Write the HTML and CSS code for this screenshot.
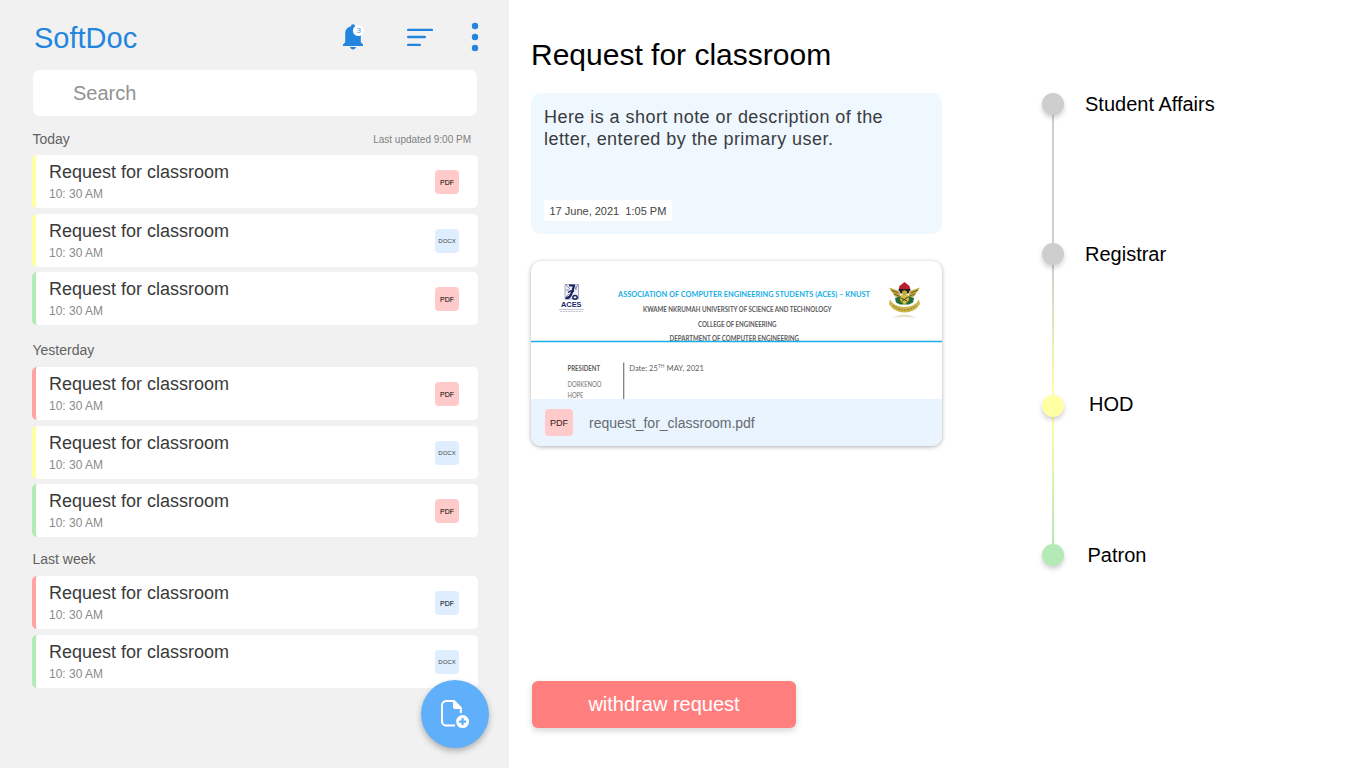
FILE: index.html
```html
<!DOCTYPE html>
<html lang="en">
<head>
<meta charset="utf-8">
<title>SoftDoc</title>
<link rel="stylesheet" href="styles.css">
</head>
<body>
<div class="app">
  <aside class="sidebar">
    <header class="topbar">
      <h1 class="brand">SoftDoc</h1>
      <nav class="actions">
        <svg class="icon-bell" width="24" height="28" viewBox="0 0 24 28">
          <path fill="#2485de" d="M11 .2c1.300 0 2 .9 2 2.100C16.600 3.200 18.800 6 18.800 9.400v8.800L21 20.400V22H1v-1.600l2.200-2.200V9.400C3.200 6 5.400 3.200 9 2.300 9 1.100 9.700.2 11 .2zM8 23h6c-.4 1.600-1.500 2.400-3 2.400S8.400 24.600 8 23z"/>
          <circle cx="16.400" cy="6.600" r="5.500" fill="#fff"/>
          <text class="bell-count" x="17" y="9.200" text-anchor="middle">3</text>
        </svg>
        <svg class="icon-sort" width="28" height="22" viewBox="0 0 28 22" stroke="#2485de" stroke-width="2.400" stroke-linecap="round">
          <path d="M2.200 3.900h23.700M2.200 11h16.600M2.200 18.900h11.600"/>
        </svg>
        <svg class="icon-more" width="8" height="30" viewBox="0 0 8 30" fill="#2485de">
          <circle cx="4" cy="4" r="3.200"/><circle cx="4" cy="15" r="3.200"/><circle cx="4" cy="26" r="3.200"/>
        </svg>
      </nav>
    </header>
    <div class="search">Search</div>

    <section class="group">
      <div class="group-head"><span>Today</span><small>Last updated 9:00 PM</small></div>
      <div class="rows">
        <article class="row yellow"><div><h2>Request for classroom</h2><p>10: 30 AM</p></div><span class="tag pdf">PDF</span></article>
        <article class="row yellow"><div><h2>Request for classroom</h2><p>10: 30 AM</p></div><span class="tag docx">DOCX</span></article>
        <article class="row green"><div><h2>Request for classroom</h2><p>10: 30 AM</p></div><span class="tag pdf">PDF</span></article>
      </div>
    </section>
    <section class="group yesterday">
      <div class="group-head"><span>Yesterday</span></div>
      <div class="rows">
        <article class="row red"><div><h2>Request for classroom</h2><p>10: 30 AM</p></div><span class="tag pdf">PDF</span></article>
        <article class="row yellow"><div><h2>Request for classroom</h2><p>10: 30 AM</p></div><span class="tag docx">DOCX</span></article>
        <article class="row green"><div><h2>Request for classroom</h2><p>10: 30 AM</p></div><span class="tag pdf">PDF</span></article>
      </div>
    </section>
    <section class="group last-week">
      <div class="group-head"><span>Last week</span></div>
      <div class="rows">
        <article class="row red"><div><h2>Request for classroom</h2><p>10: 30 AM</p></div><span class="tag pdf blue">PDF</span></article>
        <article class="row green"><div><h2>Request for classroom</h2><p>10: 30 AM</p></div><span class="tag docx">DOCX</span></article>
      </div>
    </section>

    <button class="fab" aria-label="New document">
      <svg width="30" height="30" viewBox="0 0 30 30" fill="none">
        <path d="M15 26.600H6.200A4.200 4.200 0 0 1 2 22.400V6.200A4.200 4.200 0 0 1 6.200 2H13.500L20.800 9.500V14" stroke="#fff" stroke-width="2"/>
        <path d="M13 1h1.400L21.800 8.600V10H15a2 2 0 0 1-2-2z" fill="#fff"/>
        <circle cx="22.600" cy="22.600" r="6.500" fill="#fff"/>
        <path d="M22.600 19.100v7M19.100 22.600h7" stroke="#5eaffa" stroke-width="2.200"/>
      </svg>
    </button>
  </aside>

  <main class="detail">
    <section class="request">
      <h2 class="title">Request for classroom</h2>
      <div class="note">
        <p>Here is a short note or description of the letter, entered by the primary user.</p>
        <time>17 June, 2021&nbsp; 1:05 PM</time>
      </div>
      <div class="file">
        <svg class="letter" width="411" height="138" viewBox="531 261 411 138">
          <g transform="translate(552 278)">
            <path d="M13 6.500v14.500h13.500V6.500z" fill="#eef0f7" stroke="#8f95b8" stroke-width=".8"/>
            <path d="M14 7l4 4M26 7l-3 4M14 19l3-3M14 12h3M24 8v4" stroke="#70759f" stroke-width=".8"/>
            <path d="M17 7.500h6M22 7.500q-1 5-3 9-1.500 4-5.500 3.500" fill="none" stroke="#1e2463" stroke-width="2.200"/>
            <path d="M16 14.500q4-3 6-1" fill="none" stroke="#1e2463" stroke-width="1.400"/>
            <ellipse cx="23" cy="19.300" rx="2.200" ry="1.900" fill="none" stroke="#1e2463" stroke-width="1.500"/>
            <text class="aces" x="9" y="29.300" textLength="20.500" lengthAdjust="spacingAndGlyphs">ACES</text>
            <path d="M7 31.500h25" stroke="#b9bac5" stroke-width=".8"/>
            <path d="M8 33.500h23" stroke="#c3c3cb" stroke-width="1" stroke-dasharray="2 .7"/>
          </g>
          <g transform="translate(884 278)">
            <path d="M5 9.500l10 3.500 2 7-6-1.500zM36 9.500L26 13l-2 7 6-1.500z" fill="#c3a93c"/>
            <path d="M7 12l7 3M34 12l-7 3M10 16l5 2M31 16l-5 2" stroke="#5b4c1d" stroke-width=".8"/>
            <path d="M14.500 12.500l1-4.500 5-4L25.500 8l1 4.500z" fill="#b8202e"/>
            <path d="M14.500 11h12l-2 4.500h-8z" fill="#231c20"/>
            <circle cx="20.500" cy="14.800" r="2.600" fill="#c3a93c"/>
            <path d="M11 20l6-2h7l6 2-1 4.500-4 2h-9l-4-2z" fill="#246b38"/>
            <path d="M17 17h7l1 5-4.500 5-4.500-5z" fill="#d4bf43"/>
            <path d="M17 20l6 3M24 19l-6 4" stroke="#553c1b"/>
            <path d="M6 21.500q4 7.500 14.500 7.500T35 21.500l1 4.500q-5 8.500-15.500 8.500T5 26z" fill="#ccb64b"/>
            <path d="M9 27.500q5 4.500 11.500 4.500T32 27.500" fill="none" stroke="#796327" stroke-width=".8" stroke-dasharray="2 1"/>
            <path d="M8 40q12-7 25 0-12-2-25 0" fill="#dcd6b4" opacity=".7"/>
          </g>
          <g class="letter-head">
            <text class="assoc" x="618" y="297.200" textLength="252" lengthAdjust="spacingAndGlyphs">ASSOCIATION OF COMPUTER ENGINEERING STUDENTS (ACES) – KNUST</text>
            <text x="643" y="311.900" textLength="188.500" lengthAdjust="spacingAndGlyphs">KWAME NKRUMAH UNIVERSITY OF SCIENCE AND TECHNOLOGY</text>
            <text x="698" y="326.600" textLength="78.500" lengthAdjust="spacingAndGlyphs">COLLEGE OF ENGINEERING</text>
            <text x="669.500" y="341" textLength="129.500" lengthAdjust="spacingAndGlyphs">DEPARTMENT OF COMPUTER ENGINEERING</text>
            <text x="567.500" y="371.200" textLength="32.500" lengthAdjust="spacingAndGlyphs">PRESIDENT</text>
          </g>
          <path class="letter-rule" d="M531 341.500H942"/>
          <path d="M623.700 362.500V399" stroke="#777" stroke-width="1.200"/>
          <g class="letter-body">
            <text x="567.500" y="387.300" textLength="34" lengthAdjust="spacingAndGlyphs">DORKENOO</text>
            <text x="567.500" y="397.800" textLength="16" lengthAdjust="spacingAndGlyphs">HOPE</text>
            <text class="date" x="629.300" y="370.800" textLength="28.500" lengthAdjust="spacingAndGlyphs">Date: 25</text>
            <text class="sup" x="658" y="367.500" textLength="6.500" lengthAdjust="spacingAndGlyphs">TH</text>
            <text class="date" x="666.500" y="370.800" textLength="37.500" lengthAdjust="spacingAndGlyphs">MAY, 2021</text>
          </g>
        </svg>
        <div class="file-foot"><span class="tag large pdf">PDF</span><span>request_for_classroom.pdf</span></div>
      </div>
      <button class="withdraw">withdraw request</button>
    </section>
    <ol class="timeline">
      <li class="step grey"><i class="dot"></i><span>Student Affairs</span></li>
      <li class="step registrar"><i class="dot"></i><span>Registrar</span></li>
      <li class="step hod"><i class="dot"></i><span>HOD</span></li>
      <li class="step patron"><i class="dot"></i><span>Patron</span></li>
    </ol>
  </main>
</div>
</body>
</html>
```
FILE: styles.css
```css
* { box-sizing: border-box; margin: 0; padding: 0; }
body { font-family: "Liberation Sans", Arial, sans-serif; background: #fff; color: #000; }
h1, h2 { font-weight: 400; }
button { border: 0; font: inherit; }
.app { display: flex; width: 1366px; height: 768px; overflow: hidden; }

.sidebar { position: relative; width: 509px; background: #f1f1f1; padding: 20px 31px 0 32px; }
.topbar { display: flex; justify-content: space-between; height: 36px; padding-left: 2px; }
.brand { font-size: 29px; line-height: 36px; color: #2485de; }
.actions { display: flex; align-items: flex-start; }
.icon-bell { margin: 4px 40px 0 0; }
.bell-count { font: 7.5px "Open Sans", sans-serif; fill: #2485de; }
.icon-sort { margin: 6px 37px 0 0; }
.icon-more { margin: 2px -1px 0 0; }
.search { width: 444px; height: 46px; margin: 14px 0 15px 1px; padding-left: 40px; border-radius: 7px; background: #fff; color: #929292; font-size: 20px; line-height: 46px; }

.group-head { display: flex; justify-content: space-between; height: 16px; margin-bottom: 8px; padding: 0 7px 0 .5px; font-size: 14px; line-height: 16px; color: #626262; }
.group-head small { font-size: 10px; line-height: 18px; color: #808080; }
.yesterday { margin-top: 17px; }
.last-week { margin-top: 14px; }
.yesterday .group-head, .last-week .group-head { margin-bottom: 9px; }
.rows { display: flex; flex-direction: column; gap: 5.5px; }
.row { display: flex; justify-content: space-between; align-items: flex-start; height: 53px; padding: 6px 19px 0 13px; border-left: 4px solid; border-radius: 5px; background: #fff; }
.row h2 { font-size: 18px; line-height: 22px; color: #3a3a3a; }
.row p { margin-top: 3px; font-size: 12px; line-height: 16px; color: #8a8a8a; }
.row.yellow { border-left-color: #ffffa3; }
.row.green { border-left-color: #b3eab5; }
.row.red { border-left-color: #ffa3a3; }
.tag { display: flex; align-items: center; justify-content: center; width: 24px; height: 24px; margin-top: 9px; border-radius: 4px; font-size: 7px; }
.tag.pdf { background: #ffcaca; color: #000; }
.tag.docx { background: #deeeff; color: #444; font-size: 6px; }
.tag.blue { background: #deeeff; }
.fab { position: absolute; left: 421px; top: 680px; display: flex; align-items: center; justify-content: center; width: 68px; height: 68px; padding-right: 1px; border-radius: 50%; background: #60affa; box-shadow: 0 3px 6px rgba(0, 0, 0, .28); }

.detail { display: flex; flex: 1; padding-left: 22px; }
.request { display: flex; flex-direction: column; align-items: flex-start; width: 411px; padding-top: 37px; }
.title { font-size: 30px; line-height: 36px; }
.note { display: flex; flex-direction: column; justify-content: space-between; align-items: flex-start; width: 411px; height: 141px; margin: 20px 0 27px; padding: 13px; border-radius: 10px; background: #eff7ff; }
.note p { font-size: 18px; line-height: 22px; letter-spacing: .45px; color: #3a3c40; }
.note time { width: 128px; height: 21px; padding-left: 5.5px; border-radius: 2px; background: #fff; font-size: 11px; line-height: 22px; white-space: nowrap; color: #444; }
.file { width: 411px; height: 185px; border-radius: 10px; overflow: hidden; background: #fff; box-shadow: 0 1px 4px rgba(0, 0, 0, .32); }
.letter { display: block; font-family: Lato, sans-serif; }
.letter-head { font-size: 7px; font-weight: 700; fill: #5c5c5c; }
.letter-head .assoc { font-size: 8.4px; fill: #18aee6; }
.letter-rule { fill: none; stroke: #18aee6; stroke-width: 1.3px; }
.letter-body { font-size: 7px; fill: #707070; }
.letter-body .date { font-size: 8px; fill: #606060; }
.letter-body .sup { font-size: 5px; }
.aces { font: 700 7px "Liberation Sans", sans-serif; fill: #20266e; }
.file-foot { display: flex; align-items: center; gap: 16px; height: 47px; padding-left: 14px; background: #eaf4ff; font-size: 14px; color: #666b70; }
.tag.large { width: 28px; height: 27px; margin: 0; font-size: 9px; color: #301c1c; }
.withdraw { width: 264px; height: 47px; margin: 235px 0 0 1px; padding-bottom: 2px; border-radius: 6px; background: #ff7f7f; color: #fff; font-size: 20px; line-height: 44px; box-shadow: 0 3px 6px rgba(0, 0, 0, .16); }

.timeline { list-style: none; margin: 93px 0 0 100px; }
.step { display: grid; grid-template: 22px 1fr / 22px auto; column-gap: 21px; height: 150px; font-size: 20px; line-height: 22px; }
.step::after { content: ""; width: 2px; justify-self: center; background: #cfcfcf; }
.dot { position: relative; z-index: 1; width: 22px; height: 22px; border-radius: 50%; background: #cecece; box-shadow: 0 3px 5px rgba(0, 0, 0, .18); }
.registrar { height: 152px; }
.registrar::after { background: linear-gradient(#cfcfcf, #ffffa3); }
.hod { height: 149px; column-gap: 25px; }
.hod span { margin-top: -2px; }
.hod .dot { background: #ffffa3; }
.hod::after { background: linear-gradient(#ffffa3, #b3eab5); }
.patron { height: 22px; column-gap: 23.5px; }
.patron .dot { background: #b3eab5; }
.patron::after { content: none; }
```
